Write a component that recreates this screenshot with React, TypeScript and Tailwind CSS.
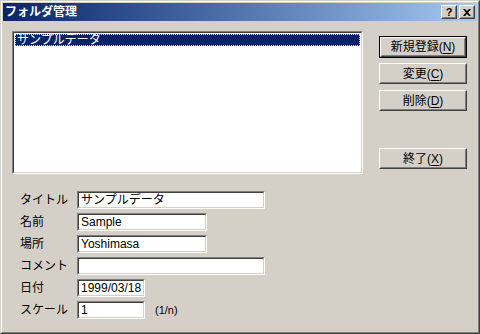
import React from "react";

const font = "font-['Liberation_Sans','Noto_Sans_CJK_JP',sans-serif]";

function Raised({ children, className = "" }: { children: React.ReactNode; className?: string }) {
  return (
    <div className={`border border-t-white border-l-white border-r-[#404040] border-b-[#404040] ${className}`}>
      <div className="w-full h-full border border-t-[#d4d0c8] border-l-[#d4d0c8] border-r-[#808080] border-b-[#808080] flex items-center justify-center">
        {children}
      </div>
    </div>
  );
}

function Sunken({ children, className = "" }: { children?: React.ReactNode; className?: string }) {
  return (
    <div className={`border border-t-[#808080] border-l-[#808080] border-r-white border-b-white ${className}`}>
      <div className="w-full h-full border border-t-[#404040] border-l-[#404040] border-r-[#d4d0c8] border-b-[#d4d0c8] bg-white">
        {children}
      </div>
    </div>
  );
}

function Btn({ label, acc, isDefault }: { label: string; acc: string; isDefault?: boolean }) {
  const inner = (
    <Raised className="w-full h-full">
      <span className="text-[12px] leading-none text-black">
        {label}(<span className="underline underline-offset-2">{acc}</span>)
      </span>
    </Raised>
  );
  return isDefault ? (
    <div className="w-[88px] h-[22px] border border-black">{inner}</div>
  ) : (
    <div className="w-[88px] h-[21px]">{inner}</div>
  );
}

function Field({ label, value, w }: { label: string; value: string; w: string }) {
  return (
    <div className="flex items-center h-[18px]">
      <span className="w-[57px] text-[12px] text-black leading-none">{label}</span>
      <Sunken className={`${w} h-[18px]`}>
        <div className="pl-[2px] text-[12px] leading-[14px] text-black">{value}</div>
      </Sunken>
    </div>
  );
}

export default function App() {
  return (
    <div className={`w-[480px] h-[334px] bg-[#d4d0c8] ${font}`}>
      <div className="w-full h-full border border-t-[#d4d0c8] border-l-[#d4d0c8] border-r-[#404040] border-b-[#404040]">
        <div className="w-full h-full border border-t-white border-l-white border-r-[#808080] border-b-[#808080] p-px flex flex-col">
          {/* title bar */}
          <div className="h-[18px] flex items-center bg-gradient-to-r from-[#0a246a] to-[#a6caf0] pl-[2px] pr-[2px]">
            <span className="text-white font-bold text-[12px] leading-none flex-1">フォルダ管理</span>
            <Raised className="w-[16px] h-[14px] bg-[#d4d0c8]">
              <span className="text-[11px] font-bold leading-none text-black">?</span>
            </Raised>
            <Raised className="w-[16px] h-[14px] bg-[#d4d0c8] ml-[2px]">
              <svg width="8" height="7" viewBox="0 0 8 7">
                <path d="M0 0h2l2 2 2-2h2L5 3.5 8 7H6L4 5 2 7H0l3-3.5z" fill="#000" />
              </svg>
            </Raised>
          </div>

          {/* body */}
          <div className="flex pt-[10px] pl-[9px]">
            <Sunken className="w-[351px] h-[143px]">
              <div className="p-px">
                <div className="h-[12px] bg-[#0a246a] border border-dotted border-[#e8d890] text-white text-[12px] leading-[10px] pl-px">
                  サンプルデータ
                </div>
              </div>
            </Sunken>
            <div className="ml-[16px] pt-[5px] flex flex-col">
              <Btn label="新規登録" acc="N" isDefault />
              <div className="h-[5px]" />
              <Btn label="変更" acc="C" />
              <div className="h-[6px]" />
              <Btn label="削除" acc="D" />
              <div className="h-[37px]" />
              <Btn label="終了" acc="X" />
            </div>
          </div>

          <div className="flex flex-col gap-[4px] pl-[17px] pt-[17px]">
            <Field label="タイトル" value="サンプルデータ" w="w-[188px]" />
            <Field label="名前" value="Sample" w="w-[130px]" />
            <Field label="場所" value="Yoshimasa" w="w-[130px]" />
            <Field label="コメント" value="" w="w-[188px]" />
            <Field label="日付" value="1999/03/18" w="w-[68px]" />
            <div className="flex items-center">
              <Field label="スケール" value="1" w="w-[68px]" />
              <span className="ml-[10px] text-[11px] text-black leading-none">(1/n)</span>
            </div>
          </div>
        </div>
      </div>
    </div>
  );
}
